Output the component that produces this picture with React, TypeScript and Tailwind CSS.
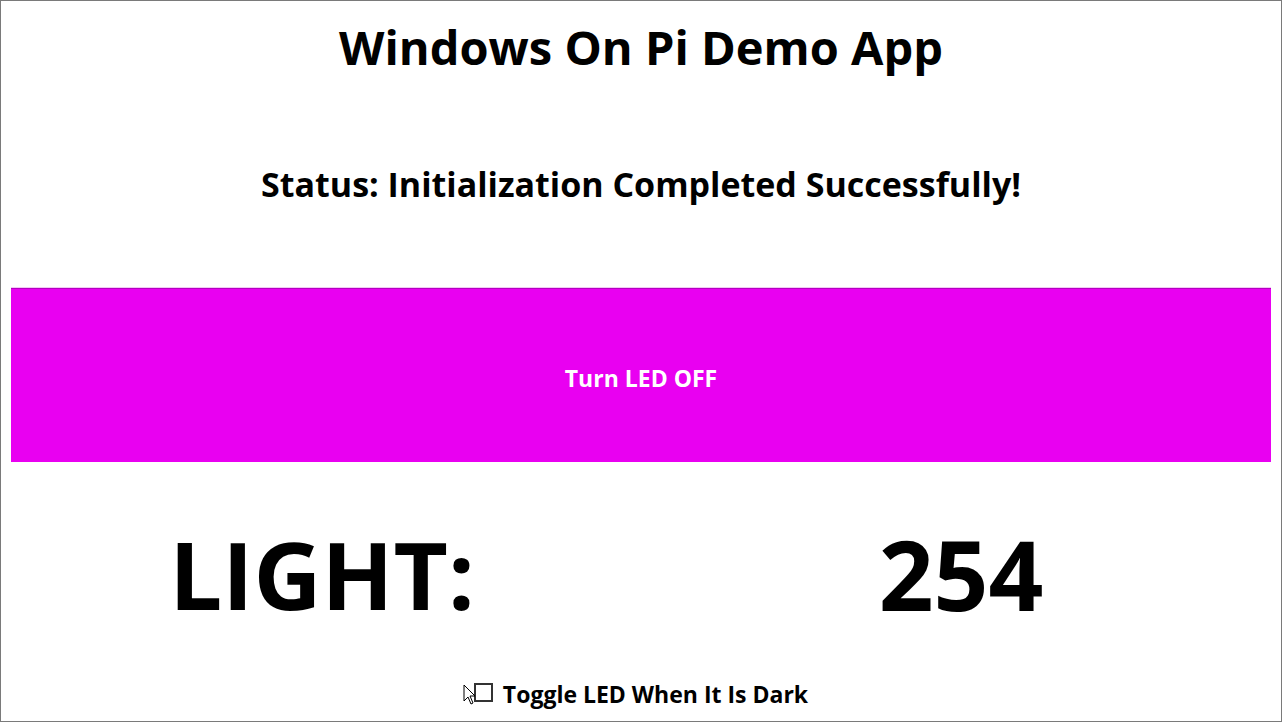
import React from "react";

const font = { fontFamily: '"Open Sans", "Noto Sans", sans-serif' };

// little pointer cursor that sits over the checkbox in the screenshot
const Cursor = () => (
  <svg width="14" height="22" viewBox="0 0 14 22" className="absolute left-[-13px] top-[-1px]">
    <path d="M1 1 L1 17 L5 13 L8 20 L10 19 L7 12 L12 12 Z" fill="#fff" stroke="#000" strokeWidth="1" strokeLinejoin="round" />
  </svg>
);

export default function App() {
  return (
    <div style={font} className="box-border flex h-[722px] w-full flex-col border border-[#7a7a7a] bg-white px-[10px] text-black">
      <div className="flex h-[92px] items-center justify-center">
        <h1 className="text-[47px] font-bold leading-none">Windows On Pi Demo App</h1>
      </div>

      <div className="flex h-[195px] items-center justify-center pb-[13px]">
        <h2 className="text-[34px] font-bold leading-none">Status: Initialization Completed Successfully!</h2>
      </div>

      <button className="box-border flex h-[174px] w-full items-center justify-center border-t border-[#b400c0] bg-[#e900f1] pt-[6px] text-[23px] font-bold text-white shadow-[0_-1px_0_#f3c6f5]">
        Turn LED OFF
      </button>

      <div className="grid h-[219px] grid-cols-2 items-center pt-[4px]">
        <div className="flex justify-center pr-[8px]">
          <span className="text-[94px] font-bold leading-none">LIGHT:</span>
        </div>
        <div className="flex justify-center pl-[10px]">
          <span className="text-[96px] font-bold leading-none">254</span>
        </div>
      </div>

      <div className="flex flex-1 items-start justify-center pt-[2px]">
        <label className="flex items-center gap-[10px]">
          <span className="relative mt-[-4px] block h-[19px] w-[19px] border-2 border-[#333]">
            <Cursor />
          </span>
          <span className="text-[23px] font-bold leading-none">Toggle LED When It Is Dark</span>
        </label>
      </div>
    </div>
  );
}
